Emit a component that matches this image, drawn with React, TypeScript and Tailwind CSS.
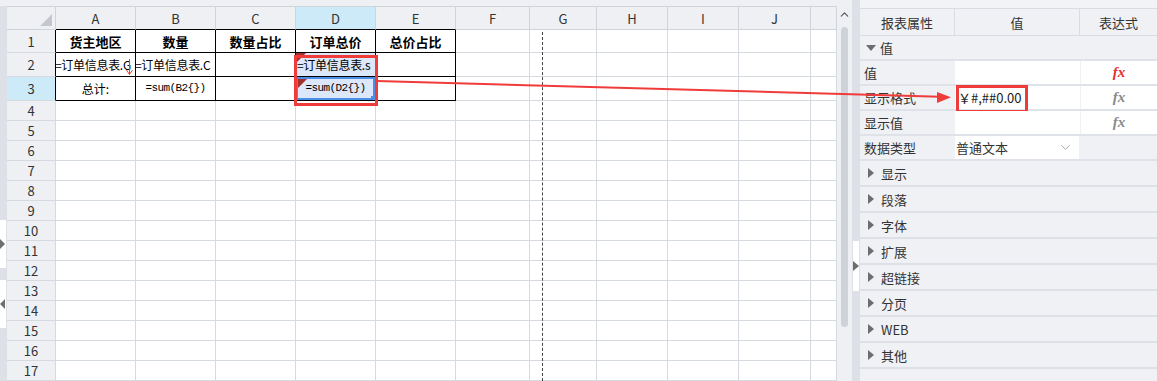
import React from 'react';
import { ChevronDown, ChevronUp } from 'lucide-react';

type Col = { k: string; w: string };

const cols: Col[] = [
  { k: 'A', w: 'w-[80px]' },
  { k: 'B', w: 'w-[80px]' },
  { k: 'C', w: 'w-[80px]' },
  { k: 'D', w: 'w-[80px]' },
  { k: 'E', w: 'w-[80px]' },
  { k: 'F', w: 'w-[74px]' },
  { k: 'G', w: 'w-[67px]' },
  { k: 'H', w: 'w-[71px]' },
  { k: 'I', w: 'w-[71px]' },
  { k: 'J', w: 'w-[72px]' },
  { k: '', w: 'w-[26px]' },
];

const rows = [
  { n: 1, h: 'h-[23px]' },
  { n: 2, h: 'h-[24px]' },
  { n: 3, h: 'h-[24px]' },
  ...Array.from({ length: 14 }, (_, i) => ({ n: i + 4, h: 'h-[20px]' })),
];

const inTable = (r: number, c: string) => r <= 3 && c !== '' && 'ABCDE'.includes(c);

const CornerMark = () => (
  <svg className="absolute left-0 top-0" width="10" height="10" viewBox="0 0 10 10">
    <polygon points="0,0 10,0 0,10" fill="#a3312c" />
  </svg>
);

const mono = "font-['Liberation_Mono','Noto_Sans_CJK_SC',monospace] text-[11px] tracking-[-0.6px]";

function CellBody({ r, c }: { r: number; c: string }) {
  if (r === 1) {
    const head: Record<string, string> = { A: '货主地区', B: '数量', C: '数量占比', D: '订单总价', E: '总价占比' };
    if (!head[c]) return null;
    return <span className="w-full text-center text-[13px] font-bold text-black">{head[c]}</span>;
  }
  if (r === 2) {
    if (c === 'A')
      return (
        <>
          <span className="ml-[-1px] whitespace-nowrap text-[12px] tracking-[-0.3px] text-black">=订单信息表.G</span>
          <svg className="absolute right-[2px] top-[6px]" width="7" height="17" viewBox="0 0 7 17">
            <line x1="3.5" y1="0" x2="3.5" y2="15" stroke="#e9413b" strokeWidth="1" />
            <polyline points="0.5,11 3.5,15.5 6.5,11" fill="none" stroke="#e9413b" strokeWidth="1" />
          </svg>
        </>
      );
    if (c === 'B')
      return <span className="ml-[-1px] whitespace-nowrap text-[12px] tracking-[-0.3px] text-black">=订单信息表.C</span>;
    if (c === 'D')
      return (
        <>
          <CornerMark />
          <span className="ml-[1px] whitespace-nowrap text-[12px] tracking-[-0.3px] text-black">=订单信息表.s</span>
        </>
      );
    return null;
  }
  if (r === 3) {
    if (c === 'A') return <span className="w-full text-center text-[12px] text-black">总计:</span>;
    if (c === 'B') return <span className={`w-full text-center text-black ${mono}`}>=sum(B2{'{}'})</span>;
    if (c === 'D')
      return (
        <div className="absolute inset-0 flex items-center justify-center border-2 border-[#4b8fe9]">
          <svg className="absolute left-0 top-0" width="9" height="9" viewBox="0 0 9 9">
            <polygon points="0,0 9,0 0,9" fill="#a3312c" />
          </svg>
          <span className={`text-black ${mono}`}>=sum(D2{'{}'})</span>
          <div className="absolute bottom-[-2px] right-[-2px] h-[4px] w-[4px] bg-[#4b8fe9]" />
        </div>
      );
  }
  return null;
}

function Spreadsheet() {
  return (
    <div className="flex w-[837px] flex-col">
      <div className="h-[8px] bg-[#eef0f4]" />
      <div className="flex flex-1">
        {/* left collapse strip */}
        <div className="flex w-[7px] flex-col bg-[#dde1e7]">
          <div className="h-[214px]" />
          <div className="flex h-[48px] w-[6px] items-center bg-white">
            <svg width="6" height="10" viewBox="0 0 6 10">
              <polygon points="0,0 5,5 0,10" fill="#6f6f6f" />
            </svg>
          </div>
          <div className="h-[12px]" />
          <div className="flex h-[48px] w-[6px] items-center bg-white">
            <svg width="6" height="10" viewBox="0 0 6 10">
              <polygon points="5,0 0,5 5,10" fill="#6f6f6f" />
            </svg>
          </div>
        </div>

        <div className="flex flex-1 flex-col">
          {/* column header */}
          <div className="flex h-[24px] border-t border-[#cfd3da] bg-[#eef0f4]">
            <div className="relative w-[49px] border-r border-b border-[#cfd3da]">
              <svg className="absolute bottom-[3px] right-[3px]" width="12" height="12" viewBox="0 0 12 12">
                <polygon points="12,0 12,12 0,12" fill="#c4c8ce" />
              </svg>
            </div>
            {cols.map((col) => (
              <div
                key={col.k || 'x'}
                className={`${col.w} flex items-center justify-center border-r border-b text-[13px] text-[#333] ${
                  col.k !== '' && 'ABCDE'.includes(col.k) ? 'border-b-black' : 'border-b-[#cfd3da]'
                } border-r-[#cfd3da] ${col.k === 'D' ? 'bg-[#cdeaf8]' : ''}`}
              >
                {col.k}
              </div>
            ))}
          </div>

          {rows.map((row) => (
            <div key={row.n} className={`flex ${row.h} shrink-0`}>
              <div
                className={`flex w-[49px] items-center justify-center border-b border-r border-b-[#d5d9e0] text-[13px] text-[#333] ${
                  row.n <= 3 ? 'border-r-black' : 'border-r-[#d5d9e0]'
                } ${row.n === 3 ? 'bg-[#cdeaf8]' : 'bg-[#eef0f4]'}`}
              >
                {row.n}
              </div>
              {cols.map((col) => (
                <div
                  key={col.k || 'x'}
                  className={`${col.w} relative flex items-center overflow-hidden border-r border-b ${
                    inTable(row.n, col.k) ? 'border-black' : 'border-[#d5d9e0]'
                  } ${col.k === 'D' && (row.n === 2 || row.n === 3) ? 'bg-[#dde7fa]' : 'bg-white'}`}
                >
                  <CellBody r={row.n} c={col.k} />
                </div>
              ))}
            </div>
          ))}
        </div>
      </div>
    </div>
  );
}

const groups = ['显示', '段落', '字体', '扩展', '超链接', '分页', 'WEB', '其他'];

const Fx = ({ red }: { red?: boolean }) => (
  <span
    className={`font-['Liberation_Serif',serif] text-[15px] font-bold italic ${red ? 'text-[#e5322d]' : 'text-[#8a8a8a]'}`}
  >
    fx
  </span>
);

function Panel() {
  return (
    <div className="flex w-[297px] flex-col bg-[#eff1f5] text-[13px] text-[#333]">
      <div className="h-[8px] bg-[#f2f3f6]" />
      <div className="flex h-[28px] border-t border-b border-[#d9dce2]">
        <div className="flex w-[95px] items-center justify-center border-r border-[#d9dce2]">报表属性</div>
        <div className="flex w-[125px] items-center justify-center border-r border-[#d9dce2]">值</div>
        <div className="flex flex-1 items-center justify-center">表达式</div>
      </div>
      <div className="flex h-[25px] items-center border-b-2 border-[#dfe2e8] pl-[6px]">
        <svg width="10" height="6" viewBox="0 0 10 6">
          <polygon points="0,0 10,0 5,6" fill="#6d6d6d" />
        </svg>
        <span className="ml-[4px]">值</span>
      </div>

      {[
        { label: '值', red: true },
        { label: '显示格式', fmt: true },
        { label: '显示值' },
      ].map((p) => (
        <div key={p.label} className="flex h-[25px] border-b-2 border-[#dfe2e8]">
          <div className="flex w-[95px] items-center pl-[4px]">{p.label}</div>
          <div className="relative flex w-[125px] items-center bg-white pl-[3px]">
            {p.fmt && (
              <>
                <span className="text-[13px] text-[#222]">￥#,##0.00</span>
                <div className="absolute left-[1px] top-[-1px] h-[28px] w-[72px] border-[3px] border-[#f03b3b]" />
              </>
            )}
          </div>
          <div className="ml-px flex flex-1 items-center justify-center bg-white">
            <Fx red={p.red} />
          </div>
        </div>
      ))}

      <div className="flex h-[25px] border-b-2 border-[#dfe2e8]">
        <div className="flex w-[95px] items-center pl-[4px]">数据类型</div>
        <div className="flex w-[124px] items-center justify-between bg-white pl-[1px] pr-[6px]">
          <span>普通文本</span>
          <ChevronDown size={15} strokeWidth={1.2} color="#8a8a8a" />
        </div>
        <div className="flex-1" />
      </div>

      {groups.map((g) => (
        <div key={g} className="flex h-[26px] shrink-0 items-center border-b-2 border-[#dde1e7] pl-[8px]">
          <svg width="6" height="10" viewBox="0 0 6 10">
            <polygon points="0,0 6,5 0,10" fill="#6d6d6d" />
          </svg>
          <span className="ml-[7px]">{g}</span>
        </div>
      ))}
    </div>
  );
}

export default function App() {
  return (
    <div className="relative flex h-[381px] w-[1157px] overflow-hidden bg-[#eef0f4] font-['Noto_Sans_CJK_SC','Noto_Sans',sans-serif] leading-none">
      <Spreadsheet />

      {/* sheet scrollbar */}
      <div className="flex w-[15px] flex-col items-center bg-[#eef0f4]">
        <ChevronUp size={13} strokeWidth={2} color="#555" className="mt-[8px]" />
        <div className="mt-[6px] h-[300px] w-[7px] rounded-full bg-[#cfd3d9]" />
      </div>

      {/* splitter */}
      <div className="flex w-[8px] flex-col bg-[#dde1e7]">
        <div className="h-[241px]" />
        <div className="ml-px flex h-[50px] w-[6px] items-center bg-white">
          <svg width="6" height="10" viewBox="0 0 6 10">
            <polygon points="0,0 6,5 0,10" fill="#6d6d6d" />
          </svg>
        </div>
      </div>

      <Panel />

      {/* selection box D2:D3 */}
      <div className="pointer-events-none absolute left-[294px] top-[55px] h-[51px] w-[84px] border-[3px] border-[#f03b3b]" />

      {/* page break line */}
      <div className="pointer-events-none absolute left-[542px] top-[32px] h-[349px] border-l border-dashed border-[#444]" />

      {/* annotation arrow */}
      <svg className="pointer-events-none absolute left-0 top-0" width="1157" height="381" viewBox="0 0 1157 381">
        <line x1="377" y1="81" x2="940" y2="96.7" stroke="#f03b3b" strokeWidth="2" />
        <polygon points="951,97.3 937,92 937,103" fill="#f03b3b" />
      </svg>
    </div>
  );
}
